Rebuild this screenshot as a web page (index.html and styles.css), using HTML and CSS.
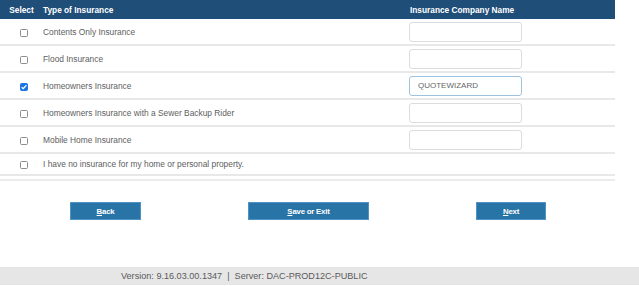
FILE: index.html
```html
<!DOCTYPE html>
<html lang="en">
<head>
  <meta charset="UTF-8" />
  <title>Insurance</title>
  <link rel="stylesheet" href="styles.css">
</head>
<body>
  <table class="ins-table">
    <thead>
      <tr>
        <th class="col-select">Select</th>
        <th class="col-type">Type of Insurance</th>
        <th class="col-company">Insurance Company Name</th>
        <th class="col-pad"></th>
      </tr>
    </thead>
    <tbody>
      <tr>
        <td class="col-select"><input type="checkbox"></td>
        <td>Contents Only Insurance</td>
        <td class="col-company"><input type="text" class="company"></td>
        <td></td>
      </tr>
      <tr>
        <td class="col-select"><input type="checkbox"></td>
        <td>Flood Insurance</td>
        <td class="col-company"><input type="text" class="company"></td>
        <td></td>
      </tr>
      <tr>
        <td class="col-select"><input type="checkbox" checked></td>
        <td>Homeowners Insurance</td>
        <td class="col-company"><input type="text" class="company active" value="QUOTEWIZARD"></td>
        <td></td>
      </tr>
      <tr>
        <td class="col-select"><input type="checkbox"></td>
        <td>Homeowners Insurance with a Sewer Backup Rider</td>
        <td class="col-company"><input type="text" class="company"></td>
        <td></td>
      </tr>
      <tr>
        <td class="col-select"><input type="checkbox"></td>
        <td>Mobile Home Insurance</td>
        <td class="col-company"><input type="text" class="company"></td>
        <td></td>
      </tr>
      <tr class="last">
        <td class="col-select"><input type="checkbox"></td>
        <td>I have no insurance for my home or personal property.</td>
        <td></td>
        <td></td>
      </tr>
    </tbody>
  </table>
  <div class="table-end"></div>

  <div class="nav">
    <button class="btn btn-back"><u>B</u>ack</button>
    <button class="btn btn-save"><u>S</u>ave or Exit</button>
    <button class="btn btn-next"><u>N</u>ext</button>
  </div>

  <div class="footer">Version: 9.16.03.00.1347 &nbsp;|&nbsp; Server: DAC-PROD12C-PUBLIC</div>
</body>
</html>
```

FILE: styles.css
```css
body {
  margin: 0;
  font-family: "Liberation Sans", Arial, sans-serif;
  font-size: 8.4px;
  color: #606060;
  background: #fff;
}
.ins-table {
  width: 615px;
  border-collapse: collapse;
}
.ins-table th {
  background: #1f4e79;
  color: #fff;
  font-weight: bold;
  font-size: 8.3px;
  height: 19px;
  padding: 0;
  text-align: left;
}
.ins-table th.col-select {
  text-align: center;
}
.ins-table th.col-company {
  text-align: left;
  padding-left: 2px;
}
.ins-table td {
  height: 25px;
  padding: 0;
  border-bottom: 2px solid #e8e8e8;
  vertical-align: middle;
}
.ins-table tr.last td {
  height: 20px;
}
.col-select {
  width: 43px;
  text-align: center;
}
.col-type {
  width: 365px;
}
.col-company {
  width: 120px;
}
.ins-table td.col-select input {
  appearance: none;
  box-sizing: border-box;
  width: 8px;
  height: 8px;
  margin: 2px 0 0 5px;
  border: 1px solid #8c8c8c;
  border-radius: 1.5px;
  background: #fff;
  vertical-align: middle;
}
.ins-table td.col-select input:checked {
  border-color: #1a73e8;
  background: #1a73e8 url("data:image/svg+xml,%3Csvg xmlns='http://www.w3.org/2000/svg' viewBox='0 0 8 8'%3E%3Cpath d='M1.6 4.2 3.2 5.7 6.4 2.2' fill='none' stroke='white' stroke-width='1.3'/%3E%3C/svg%3E") center / 8px 8px no-repeat;
}
.company {
  box-sizing: border-box;
  width: 113px;
  height: 20px;
  margin: 0 0 0 1px;
  border: 1px solid #dcdcdc;
  border-radius: 3px;
  font-family: "Liberation Sans", Arial, sans-serif;
  font-size: 8px;
  color: #666;
  padding: 0 8px;
  display: block;
}
.company.active {
  border-color: #9ec3e0;
}
.table-end {
  width: 615px;
  height: 2px;
  margin-top: 3px;
  background: #ececec;
}
.nav {
  width: 615px;
  display: grid;
  grid-template-columns: 1fr 1fr 1fr;
  justify-items: center;
  margin-top: 21px;
}
.btn {
  height: 18px;
  background: #2874a6;
  color: #fff;
  border: 1px solid #4f93c4;
  font-family: "Liberation Sans", Arial, sans-serif;
  font-size: 7.8px;
  font-weight: bold;
  letter-spacing: -0.2px;
  padding: 0;
}
.btn-back {
  width: 71px;
  margin-left: 6px;
}
.btn-save {
  width: 121px;
  margin-left: 2px;
}
.btn-next {
  width: 70px;
  margin-right: 3px;
}
.footer {
  margin-top: 47px;
  height: 18px;
  line-height: 18px;
  background: #e6e6e6;
  color: #5a5a5a;
  font-size: 9.1px;
  padding-left: 121px;
}
```
